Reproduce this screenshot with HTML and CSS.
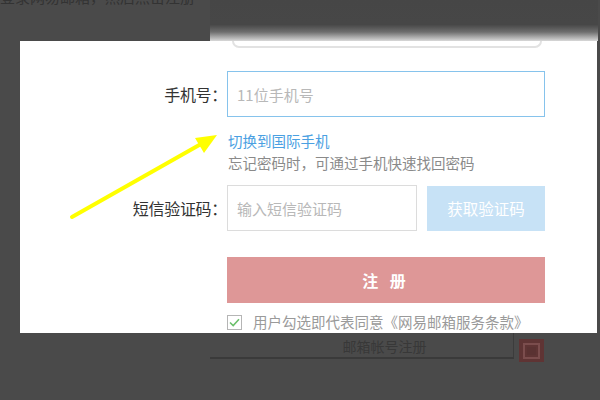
FILE: index.html
```html
<!DOCTYPE html>
<html lang="zh-CN">
<head>
<meta charset="utf-8">
<title>注册</title>
<link rel="stylesheet" href="styles.css">
</head>
<body>
<div class="page">
  <div class="top">
    <div class="top-left"><span class="cut-text">登录网易邮箱，然后点击注册</span></div>
    <div class="blur-panel"></div>
  </div>
  <div class="modal">
    <div class="stub-row"><div class="stub"></div></div>
    <div class="row phone-row">
      <span class="label">手机号：</span>
      <div class="input phone"><span class="ph">11位手机号</span></div>
    </div>
    <div class="hints">
      <span class="link">切换到国际手机</span>
      <span class="tip">忘记密码时，可通过手机快速找回密码</span>
    </div>
    <div class="row sms-row">
      <span class="label">短信验证码：</span>
      <div class="input sms"><span class="ph">输入短信验证码</span></div>
      <div class="get-code">获取验证码</div>
    </div>
    <div class="row reg-row">
      <span class="label"></span>
      <div class="reg">注&nbsp;册</div>
    </div>
    <div class="row agree-row">
      <span class="label"></span>
      <span class="check">
        <svg width="15" height="15" viewBox="0 0 15 15"><rect x="0.5" y="0.5" width="14" height="14" fill="#fff" stroke="#b5b5b5"/><path d="M3 7.5 L6.2 10.6 L12 4.2" fill="none" stroke="#6cc06c" stroke-width="1.6"/></svg>
      </span>
      <span class="agree-text">用户勾选即代表同意《网易邮箱服务条款》</span>
    </div>
  </div>
  <div class="below">
    <div class="mail-reg">邮箱帐号注册</div>
    <div class="red-icon"><div class="red-ring"><div class="red-core"></div></div></div>
  </div>
  <svg class="arrow" width="600" height="400" viewBox="0 0 600 400">
    <line x1="72" y1="217" x2="201" y2="144" stroke="#ffff00" stroke-width="4" stroke-linecap="round"/>
    <polygon points="217,135 195,138 204,153" fill="#ffff00"/>
  </svg>
</div>
</body>
</html>
```

FILE: styles.css
```css
html, body {
  margin: 0;
  padding: 0;
}
body {
  background: #4a4a4a;
  font-family: "Noto Sans CJK SC", "Noto Sans", sans-serif;
}
.page {
  position: relative;
  width: 600px;
  height: 400px;
  overflow: hidden;
  background: #4a4a4a;
}
.top {
  display: flex;
  height: 41px;
}
.top-left {
  width: 210px;
  height: 41px;
  overflow: hidden;
}
.cut-text {
  display: block;
  margin-top: -13px;
  font-size: 15px;
  line-height: 20px;
  color: #333;
  white-space: nowrap;
}
.blur-panel {
  width: 388px;
  height: 41px;
  background: linear-gradient(to bottom, #464646 0%, #474747 60%, #6e6e6e 78%, #a8a8a8 90%, #d8d8d8 100%);
}
.modal {
  margin-left: 20px;
  width: 577px;
  height: 292px;
  background: #fff;
  display: flex;
  flex-direction: column;
}
.stub-row {
  height: 7px;
  padding-left: 212px;
}
.stub {
  width: 306px;
  height: 5px;
  border: 2px solid #e2e2e2;
  border-top: none;
  border-radius: 0 0 10px 10px;
}
.row {
  display: flex;
  align-items: center;
}
.label {
  width: 207px;
  flex: none;
  text-align: right;
  font-size: 16px;
  color: #333;
  letter-spacing: -0.3px;
}
.phone-row {
  margin-top: 23px;
}
.input {
  box-sizing: border-box;
  height: 46px;
  display: flex;
  align-items: center;
  padding-left: 9px;
  background: #fff;
}
.phone {
  width: 318px;
  border: 1px solid #86c3ec;
}
.sms {
  width: 190px;
  border: 1px solid #dcdcdc;
}
.ph {
  font-size: 15px;
  color: #b8b8b8;
}
.hints {
  display: flex;
  flex-direction: column;
  padding-left: 208px;
  margin-top: 13px;
  line-height: 22px;
  font-size: 14.5px;
}
.link {
  color: #4aa0e2;
}
.tip {
  color: #8a8a8a;
}
.sms-row {
  margin-top: 11px;
}
.get-code {
  margin-left: 10px;
  width: 118px;
  height: 45px;
  background: #c7e2f6;
  color: #fff;
  font-size: 15.5px;
  display: flex;
  align-items: center;
  justify-content: center;
}
.reg-row {
  margin-top: 26px;
}
.reg {
  width: 318px;
  height: 46px;
  background: #de9797;
  color: #fff;
  font-size: 16px;
  font-weight: bold;
  letter-spacing: 4px;
  display: flex;
  align-items: center;
  justify-content: center;
}
.agree-row {
  margin-top: 10px;
}
.check {
  display: flex;
  margin-left: 0;
}
.agree-text {
  margin-left: 11px;
  font-size: 14.5px;
  color: #9a9a9a;
  line-height: 18px;
}
.below {
  display: flex;
  padding-left: 210px;
}
.mail-reg {
  width: 303px;
  height: 24px;
  box-sizing: content-box;
  padding-left: 0;
  border-bottom: 2px solid #3a3a3a;
  border-right: 1px solid #3c3c3c;
  text-align: center;
  font-size: 14px;
  line-height: 26px;
  color: #383838;
  text-indent: 46px;
}
.red-icon {
  margin-left: 5px;
  margin-top: 6px;
  width: 25px;
  height: 23px;
  background: #5f3434;
  display: flex;
  align-items: center;
  justify-content: center;
}
.red-ring {
  width: 13px;
  height: 12px;
  border: 2px solid #7b4d4d;
  display: flex;
  align-items: center;
  justify-content: center;
}
.red-core {
  width: 9px;
  height: 8px;
  background: #5a3232;
}
.arrow {
  position: absolute;
  left: 0;
  top: 0;
  pointer-events: none;
}
```
